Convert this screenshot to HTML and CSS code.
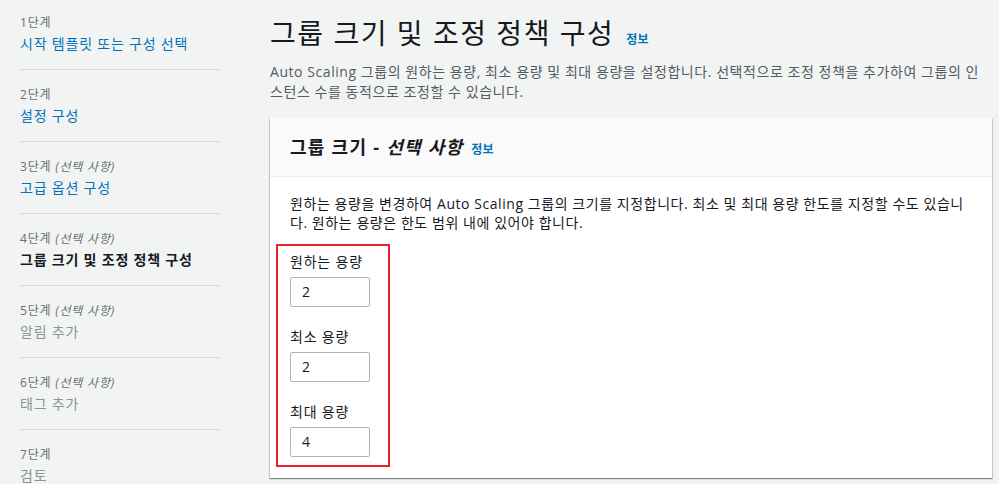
FILE: index.html
```html
<!DOCTYPE html>
<html lang="ko">
<head>
<meta charset="utf-8">
<link rel="stylesheet" href="styles.css">
</head>
<body>
<div class="page">
  <nav class="steps">
    <div class="step">
      <div class="step-num">1단계</div>
      <div class="step-title link">시작 템플릿 또는 구성 선택</div>
    </div>
    <div class="step">
      <div class="step-num">2단계</div>
      <div class="step-title link">설정 구성</div>
    </div>
    <div class="step">
      <div class="step-num">3단계 <i>(선택 사항)</i></div>
      <div class="step-title link">고급 옵션 구성</div>
    </div>
    <div class="step">
      <div class="step-num">4단계 <i>(선택 사항)</i></div>
      <div class="step-title current">그룹 크기 및 조정 정책 구성</div>
    </div>
    <div class="step">
      <div class="step-num">5단계 <i>(선택 사항)</i></div>
      <div class="step-title disabled">알림 추가</div>
    </div>
    <div class="step">
      <div class="step-num">6단계 <i>(선택 사항)</i></div>
      <div class="step-title disabled">태그 추가</div>
    </div>
    <div class="step last">
      <div class="step-num">7단계</div>
      <div class="step-title disabled">검토</div>
    </div>
  </nav>
  <main class="main">
    <h1 class="title">그룹 크기 및 조정 정책 구성 <span class="info">정보</span></h1>
    <p class="desc">Auto Scaling 그룹의 원하는 용량, 최소 용량 및 최대 용량을 설정합니다. 선택적으로 조정 정책을 추가하여 그룹의 인스턴스 수를 동적으로 조정할 수 있습니다.</p>
    <section class="card">
      <header class="card-head">
        <h2 class="card-title">그룹 크기 - <i>선택 사항</i> <span class="info">정보</span></h2>
      </header>
      <div class="card-body">
        <p class="card-desc">원하는 용량을 변경하여 Auto Scaling 그룹의 크기를 지정합니다. 최소 및 최대 용량 한도를 지정할 수도 있습니다. 원하는 용량은 한도 범위 내에 있어야 합니다.</p>
        <div class="highlight">
          <div class="field">
            <label class="label">원하는 용량</label>
            <div class="input">2</div>
          </div>
          <div class="field">
            <label class="label">최소 용량</label>
            <div class="input">2</div>
          </div>
          <div class="field">
            <label class="label">최대 용량</label>
            <div class="input">4</div>
          </div>
        </div>
      </div>
    </section>
  </main>
</div>
</body>
</html>
```

FILE: styles.css
```css
* { box-sizing: border-box; }
html, body { margin: 0; padding: 0; }
body {
  background: #f2f3f3;
  font-family: "Open Sans", "Noto Sans CJK KR", sans-serif;
  letter-spacing: 0.05em;
  color: #16191f;
  width: 999px;
  height: 484px;
  overflow: hidden;
}
.page {
  display: flex;
  padding-left: 20px;
}
.steps {
  width: 200px;
  flex: none;
  padding-top: 14px;
}
.step {
  border-bottom: 1px solid #d5dbdb;
  padding: 16px 0 14px;
}
.step:first-child { padding-top: 0; }
.step.last { border-bottom: none; }
.step-num {
  font-size: 12px;
  line-height: 18px;
  color: #687078;
}
.step-num i { font-style: italic; }
.step-title {
  font-size: 14px;
  line-height: 22px;
  margin-top: 1px;
}
.step-title.link { color: #0073bb; }
.step-title.current { font-weight: 700; color: #16191f; }
.step-title.disabled { color: #879596; }

.main {
  margin-left: 50px;
  width: 722px;
  flex: none;
}
.title {
  margin: 0;
  font-size: 28px;
  font-weight: 400;
  line-height: 36px;
  padding-top: 15px;
  letter-spacing: 0.055em;
  color: #16191f;
}
.info {
  font-size: 12px;
  font-weight: 700;
  color: #0073bb;
  font-style: normal;
  letter-spacing: 0.02em;
  margin-left: 4px;
}
.title .info { margin-left: 3px; }
.desc {
  margin: 4px 0 0;
  font-size: 14px;
  line-height: 20px;
  letter-spacing: 0.04em;
  color: #545b64;
}
.card {
  margin-top: 16px;
  background: #fff;
  box-shadow: 0 1px 1px 0 rgba(0, 28, 36, 0.3), 1px 1px 1px 0 rgba(0, 28, 36, 0.15), -1px 1px 1px 0 rgba(0, 28, 36, 0.15);
  height: 360px;
}
.card-head {
  background: #fafafa;
  border-bottom: 1px solid #eaeded;
  height: 59px;
  padding: 16px 20px 0;
}
.card-title {
  margin: 0;
  font-size: 18px;
  line-height: 26px;
  font-weight: 700;
  letter-spacing: 0.07em;
}
.card-title i { font-style: italic; }
.card-title .info { margin-left: 2px; }
.card-body {
  padding: 17px 14px 0 6px;
}
.card-desc {
  margin: 0 0 0 14px;
  font-size: 14px;
  line-height: 19px;
  letter-spacing: 0.04em;
  color: #16191f;
}
.highlight {
  margin-top: 12px;
  width: 114px;
  height: 223px;
  border: 2px solid #e8212b;
  padding: 6px 0 0 12px;
}
.field + .field { margin-top: 20px; }
.label {
  display: block;
  font-size: 14px;
  line-height: 20px;
  color: #16191f;
}
.input {
  margin-top: 5px;
  width: 80px;
  height: 30px;
  border: 1px solid #aab7b8;
  border-radius: 2px;
  font-size: 14px;
  line-height: 28px;
  padding-left: 11px;
  color: #16191f;
}
```
